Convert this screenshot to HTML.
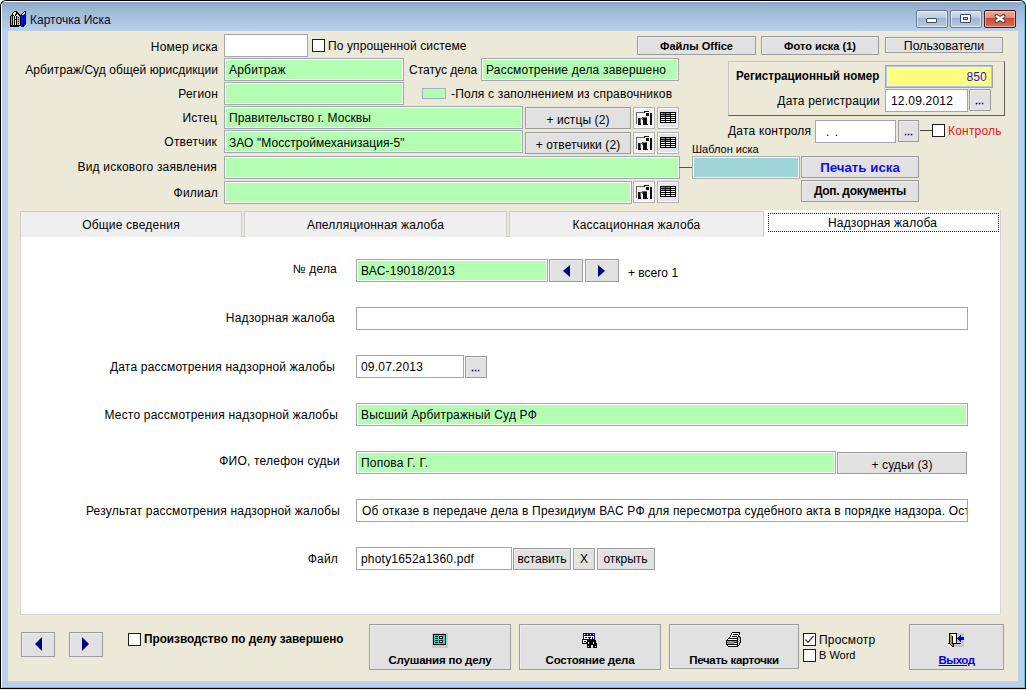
<!DOCTYPE html>
<html><head><meta charset="utf-8">
<style>
*{box-sizing:border-box;margin:0;padding:0}
html,body{width:1026px;height:690px;overflow:hidden;background:#fff}
body{position:relative;font-family:"Liberation Sans",sans-serif;font-size:12px;color:#000}
svg{display:block}
.a{position:absolute}
.win{position:absolute;left:0;top:0;width:1026px;height:689px;background:#000;border-radius:6px 6px 0 0}
.frame{position:absolute;left:1px;top:1px;width:1024px;height:687px;background:linear-gradient(#fff 0,#fff 1px,#8ea9ca 1px,#a3bcd9 12px,#b9d1ea 30px,#b9d1ea 100%);border-radius:5px 5px 0 0}
.client{position:absolute;left:8px;top:31px;width:1010px;height:650px;background:#ECE9D8}
.t{position:absolute;white-space:nowrap;line-height:14px;letter-spacing:0.2px}
.r{text-align:right}
.fld{position:absolute;background:#B4FEB4;border:1px solid #a4a4b2;box-shadow:inset 1px 1px 0 #fff, inset -1px -1px 0 #fff}
.wf{position:absolute;background:#fff;border:1px solid #a4a4b2}
.btn{position:absolute;background:#E1E1E1;border:1px solid #9c9c9c;box-shadow:inset 1px 1px 0 #ececec;text-align:center;white-space:nowrap;line-height:14px;letter-spacing:0.2px}
.b{font-weight:bold;letter-spacing:0}
.cb{position:absolute;width:13px;height:13px;border:1px solid #1c1c1c;background:#fff}
.tab{position:absolute;top:211px;height:26px;background:#EFEFEF;border:1px solid #cdcdcd;border-bottom:none;text-align:center;line-height:26px;letter-spacing:0.2px}
.tri{position:absolute;width:0;height:0}
.ib{position:absolute;background:#F4F4F4;border:1px solid #b4b4b4;box-shadow:inset 1px 1px 0 #fff,inset -1px -1px 0 #fff}
.gb{position:absolute;background:#E4E4E4;border:1px solid #b4b4b4;box-shadow:inset 1px 1px 0 #f8f8f8,inset -1px -1px 0 #f8f8f8}
</style></head><body>
<div class="win"></div>
<div class="frame"></div>
<div class="a" style="left:0;top:689px;width:1026px;height:1px;background:#f5f0a0"></div>
<div class="a" style="left:1px;top:687px;width:1024px;height:1px;background:#3fd0f0"></div><div class="a" style="left:1px;top:4px;width:1px;height:684px;background:#f4f8ff"></div><div class="a" style="left:1024px;top:4px;width:1px;height:684px;background:#3fd0f0"></div>
<div class="client"></div>

<!-- title bar -->
<div class="a" style="left:10px;top:11px"><svg width="16" height="16" viewBox="0 0 16 16" shape-rendering="crispEdges"><rect x="4" y="0" width="3" height="1" fill="#000"/><rect x="14" y="0" width="2" height="1" fill="#000"/><rect x="3" y="1" width="1" height="1" fill="#000"/><rect x="4" y="1" width="2" height="1" fill="#e8e8e8"/><rect x="6" y="1" width="2" height="1" fill="#000"/><rect x="13" y="1" width="1" height="1" fill="#000"/><rect x="14" y="1" width="1" height="1" fill="#e8e8e8"/><rect x="15" y="1" width="1" height="1" fill="#000"/><rect x="2" y="2" width="1" height="1" fill="#000"/><rect x="3" y="2" width="2" height="1" fill="#e8e8e8"/><rect x="5" y="2" width="1" height="1" fill="#ffff00"/><rect x="6" y="2" width="3" height="1" fill="#000"/><rect x="12" y="2" width="1" height="1" fill="#000"/><rect x="13" y="2" width="1" height="1" fill="#e8e8e8"/><rect x="14" y="2" width="1" height="1" fill="#f0c8c8"/><rect x="15" y="2" width="1" height="1" fill="#000"/><rect x="2" y="3" width="1" height="1" fill="#000"/><rect x="3" y="3" width="1" height="1" fill="#e8e8e8"/><rect x="4" y="3" width="1" height="1" fill="#ffff00"/><rect x="5" y="3" width="2" height="1" fill="#000"/><rect x="7" y="3" width="1" height="1" fill="#e8e8e8"/><rect x="8" y="3" width="2" height="1" fill="#000"/><rect x="11" y="3" width="1" height="1" fill="#000"/><rect x="12" y="3" width="2" height="1" fill="#f0c8c8"/><rect x="14" y="3" width="1" height="1" fill="#0010ff"/><rect x="15" y="3" width="1" height="1" fill="#000"/><rect x="1" y="4" width="3" height="1" fill="#000"/><rect x="4" y="4" width="1" height="1" fill="#ffff00"/><rect x="5" y="4" width="1" height="1" fill="#000"/><rect x="6" y="4" width="2" height="1" fill="#e8e8e8"/><rect x="8" y="4" width="1" height="1" fill="#b8b8b8"/><rect x="9" y="4" width="2" height="1" fill="#000"/><rect x="11" y="4" width="2" height="1" fill="#0010ff"/><rect x="13" y="4" width="1" height="1" fill="#000"/><rect x="14" y="4" width="1" height="1" fill="#0010ff"/><rect x="15" y="4" width="1" height="1" fill="#000"/><rect x="0" y="5" width="1" height="1" fill="#000"/><rect x="1" y="5" width="1" height="1" fill="#00e8f0"/><rect x="2" y="5" width="1" height="1" fill="#000"/><rect x="3" y="5" width="1" height="1" fill="#ffff00"/><rect x="4" y="5" width="1" height="1" fill="#000"/><rect x="5" y="5" width="1" height="1" fill="#e8e8e8"/><rect x="6" y="5" width="1" height="1" fill="#000"/><rect x="7" y="5" width="3" height="1" fill="#b8b8b8"/><rect x="10" y="5" width="1" height="1" fill="#000"/><rect x="11" y="5" width="2" height="1" fill="#0010ff"/><rect x="13" y="5" width="1" height="1" fill="#000"/><rect x="14" y="5" width="1" height="1" fill="#0010ff"/><rect x="15" y="5" width="1" height="1" fill="#000"/><rect x="0" y="6" width="1" height="1" fill="#000"/><rect x="1" y="6" width="1" height="1" fill="#00e8f0"/><rect x="2" y="6" width="1" height="1" fill="#000"/><rect x="3" y="6" width="1" height="1" fill="#ffff00"/><rect x="4" y="6" width="1" height="1" fill="#000"/><rect x="5" y="6" width="1" height="1" fill="#e8e8e8"/><rect x="6" y="6" width="1" height="1" fill="#000"/><rect x="7" y="6" width="1" height="1" fill="#b8b8b8"/><rect x="8" y="6" width="1" height="1" fill="#000"/><rect x="9" y="6" width="1" height="1" fill="#b8b8b8"/><rect x="10" y="6" width="1" height="1" fill="#000"/><rect x="11" y="6" width="2" height="1" fill="#0010ff"/><rect x="13" y="6" width="1" height="1" fill="#000"/><rect x="14" y="6" width="1" height="1" fill="#0010ff"/><rect x="15" y="6" width="1" height="1" fill="#000"/><rect x="0" y="7" width="1" height="1" fill="#000"/><rect x="1" y="7" width="1" height="1" fill="#00e8f0"/><rect x="2" y="7" width="1" height="1" fill="#000"/><rect x="3" y="7" width="1" height="1" fill="#ffff00"/><rect x="4" y="7" width="1" height="1" fill="#000"/><rect x="5" y="7" width="1" height="1" fill="#e8e8e8"/><rect x="6" y="7" width="1" height="1" fill="#000"/><rect x="7" y="7" width="3" height="1" fill="#b8b8b8"/><rect x="10" y="7" width="1" height="1" fill="#000"/><rect x="11" y="7" width="2" height="1" fill="#0010ff"/><rect x="13" y="7" width="1" height="1" fill="#000"/><rect x="14" y="7" width="1" height="1" fill="#0010ff"/><rect x="15" y="7" width="1" height="1" fill="#000"/><rect x="0" y="8" width="1" height="1" fill="#000"/><rect x="1" y="8" width="1" height="1" fill="#00e8f0"/><rect x="2" y="8" width="1" height="1" fill="#000"/><rect x="3" y="8" width="1" height="1" fill="#ffff00"/><rect x="4" y="8" width="3" height="1" fill="#000"/><rect x="7" y="8" width="1" height="1" fill="#b8b8b8"/><rect x="8" y="8" width="1" height="1" fill="#000"/><rect x="9" y="8" width="1" height="1" fill="#b8b8b8"/><rect x="10" y="8" width="1" height="1" fill="#000"/><rect x="11" y="8" width="2" height="1" fill="#0010ff"/><rect x="13" y="8" width="1" height="1" fill="#000"/><rect x="14" y="8" width="1" height="1" fill="#0010ff"/><rect x="15" y="8" width="1" height="1" fill="#000"/><rect x="0" y="9" width="1" height="1" fill="#000"/><rect x="1" y="9" width="1" height="1" fill="#00e8f0"/><rect x="2" y="9" width="1" height="1" fill="#000"/><rect x="3" y="9" width="1" height="1" fill="#ffff00"/><rect x="4" y="9" width="1" height="1" fill="#000"/><rect x="5" y="9" width="1" height="1" fill="#e8e8e8"/><rect x="6" y="9" width="1" height="1" fill="#000"/><rect x="7" y="9" width="3" height="1" fill="#b8b8b8"/><rect x="10" y="9" width="1" height="1" fill="#000"/><rect x="11" y="9" width="2" height="1" fill="#0010ff"/><rect x="13" y="9" width="1" height="1" fill="#000"/><rect x="14" y="9" width="1" height="1" fill="#0010ff"/><rect x="15" y="9" width="1" height="1" fill="#000"/><rect x="0" y="10" width="1" height="1" fill="#000"/><rect x="1" y="10" width="1" height="1" fill="#00e8f0"/><rect x="2" y="10" width="1" height="1" fill="#000"/><rect x="3" y="10" width="1" height="1" fill="#ffff00"/><rect x="4" y="10" width="1" height="1" fill="#000"/><rect x="5" y="10" width="1" height="1" fill="#e8e8e8"/><rect x="6" y="10" width="1" height="1" fill="#000"/><rect x="7" y="10" width="1" height="1" fill="#b8b8b8"/><rect x="8" y="10" width="1" height="1" fill="#000"/><rect x="9" y="10" width="1" height="1" fill="#b8b8b8"/><rect x="10" y="10" width="1" height="1" fill="#000"/><rect x="11" y="10" width="2" height="1" fill="#0010ff"/><rect x="13" y="10" width="1" height="1" fill="#000"/><rect x="14" y="10" width="1" height="1" fill="#0010ff"/><rect x="15" y="10" width="1" height="1" fill="#000"/><rect x="0" y="11" width="1" height="1" fill="#000"/><rect x="1" y="11" width="1" height="1" fill="#00e8f0"/><rect x="2" y="11" width="1" height="1" fill="#000"/><rect x="3" y="11" width="1" height="1" fill="#ffff00"/><rect x="4" y="11" width="1" height="1" fill="#000"/><rect x="5" y="11" width="1" height="1" fill="#e8e8e8"/><rect x="6" y="11" width="1" height="1" fill="#000"/><rect x="7" y="11" width="3" height="1" fill="#b8b8b8"/><rect x="10" y="11" width="1" height="1" fill="#000"/><rect x="11" y="11" width="2" height="1" fill="#0010ff"/><rect x="13" y="11" width="1" height="1" fill="#000"/><rect x="14" y="11" width="1" height="1" fill="#0010ff"/><rect x="15" y="11" width="1" height="1" fill="#000"/><rect x="0" y="12" width="1" height="1" fill="#000"/><rect x="1" y="12" width="1" height="1" fill="#00e8f0"/><rect x="2" y="12" width="1" height="1" fill="#000"/><rect x="3" y="12" width="1" height="1" fill="#ffff00"/><rect x="4" y="12" width="1" height="1" fill="#000"/><rect x="5" y="12" width="1" height="1" fill="#e8e8e8"/><rect x="6" y="12" width="1" height="1" fill="#000"/><rect x="7" y="12" width="1" height="1" fill="#b8b8b8"/><rect x="8" y="12" width="1" height="1" fill="#000"/><rect x="9" y="12" width="1" height="1" fill="#b8b8b8"/><rect x="10" y="12" width="1" height="1" fill="#000"/><rect x="11" y="12" width="2" height="1" fill="#0010ff"/><rect x="13" y="12" width="1" height="1" fill="#000"/><rect x="14" y="12" width="1" height="1" fill="#0010ff"/><rect x="15" y="12" width="1" height="1" fill="#000"/><rect x="0" y="13" width="1" height="1" fill="#000"/><rect x="1" y="13" width="1" height="1" fill="#00e8f0"/><rect x="2" y="13" width="1" height="1" fill="#000"/><rect x="3" y="13" width="1" height="1" fill="#ffff00"/><rect x="4" y="13" width="1" height="1" fill="#000"/><rect x="5" y="13" width="1" height="1" fill="#e8e8e8"/><rect x="6" y="13" width="1" height="1" fill="#000"/><rect x="7" y="13" width="3" height="1" fill="#b8b8b8"/><rect x="10" y="13" width="1" height="1" fill="#000"/><rect x="11" y="13" width="2" height="1" fill="#0010ff"/><rect x="13" y="13" width="3" height="1" fill="#000"/><rect x="0" y="14" width="11" height="1" fill="#000"/><rect x="11" y="14" width="2" height="1" fill="#0010ff"/><rect x="13" y="14" width="2" height="1" fill="#000"/><rect x="0" y="15" width="9" height="1" fill="#000"/><rect x="11" y="15" width="3" height="1" fill="#000"/></svg></div>
<div class="t" style="left:30px;top:13px;font-size:13px;color:#0a0a28;letter-spacing:0;transform:scaleX(0.925);transform-origin:0 0">Карточка Иска</div>
<div class="a" style="left:916px;top:10px;width:32px;height:18px;border:1px solid #687890;border-radius:2px;background:linear-gradient(#d4e0f0 0,#bccfe6 40%,#9cb4d2 44%,#b8cce4 100%);box-shadow:inset 0 0 0 1px rgba(255,255,255,.6)"></div>
<div class="a" style="left:926px;top:18px;width:11px;height:5px;background:#fff;border:1px solid #3e4a5e;border-radius:1px"></div>
<div class="a" style="left:950px;top:10px;width:32px;height:18px;border:1px solid #687890;border-radius:2px;background:linear-gradient(#d4e0f0 0,#bccfe6 40%,#9cb4d2 44%,#b8cce4 100%);box-shadow:inset 0 0 0 1px rgba(255,255,255,.6)"></div>
<div class="a" style="left:960px;top:14px;width:11px;height:9px;background:#fff;border:1px solid #3e4a5e;border-radius:1px"></div>
<div class="a" style="left:963px;top:17px;width:5px;height:3px;border:1px solid #3e4a5e;background:#b0c4e0"></div>
<div class="a" style="left:984px;top:10px;width:32px;height:18px;border:1px solid #4a1a18;border-radius:2px;background:linear-gradient(#eca898 0,#e29080 40%,#c84a30 44%,#d87058 100%);box-shadow:inset 0 0 0 1px rgba(255,210,200,.6)"></div>
<svg class="a" style="left:993px;top:13px" width="14" height="11" viewBox="0 0 14 11"><path d="M3.5 3 L10.5 8 M10.5 3 L3.5 8" stroke="#4a3838" stroke-width="4" fill="none" stroke-linecap="round"/><path d="M3.8 3.3 L10.2 7.7 M10.2 3.3 L3.8 7.7" stroke="#fff" stroke-width="2.3" fill="none" stroke-linecap="square"/></svg>

<!-- top form labels -->
<div class="t r" style="right:808px;top:40px">Номер иска</div>
<div class="t r" style="right:808px;top:63px;letter-spacing:0.07px">Арбитраж/Суд общей юрисдикции</div>
<div class="t r" style="right:808px;top:87px">Регион</div>
<div class="t r" style="right:809px;top:111px">Истец</div>
<div class="t r" style="right:809px;top:135px">Ответчик</div>
<div class="t r" style="right:809px;top:160px">Вид искового заявления</div>
<div class="t r" style="right:808px;top:186px">Филиал</div>

<div class="wf" style="left:224px;top:34px;width:84px;height:23px"></div>
<div class="fld" style="left:224px;top:58px;width:180px;height:23px"></div>
<div class="fld" style="left:224px;top:82px;width:180px;height:23px"></div>
<div class="fld" style="left:224px;top:106px;width:299px;height:23px"></div>
<div class="fld" style="left:224px;top:130px;width:299px;height:23px"></div>
<div class="fld" style="left:224px;top:156px;width:456px;height:23px"></div>
<div class="fld" style="left:224px;top:181px;width:408px;height:23px"></div>

<div class="t" style="left:229px;top:63px">Арбитраж</div>
<div class="t" style="left:229px;top:111px;letter-spacing:0.07px">Правительство г. Москвы</div>
<div class="t" style="left:229px;top:136px;letter-spacing:0.06px">ЗАО "Мосстроймеханизация-5"</div>

<div class="cb" style="left:312px;top:39px"></div>
<div class="t" style="left:328px;top:39px;letter-spacing:0.1px">По упрощенной системе</div>

<div class="t" style="left:409px;top:63px;letter-spacing:0">Статус дела</div>
<div class="fld" style="left:481px;top:58px;width:198px;height:23px"></div>
<div class="t" style="left:486px;top:63px">Рассмотрение дела завершено</div>

<div class="a" style="left:422px;top:88px;width:24px;height:11px;background:#B4FEB4;border:1px solid #a8b0c8"></div>
<div class="t" style="left:451px;top:87px">-Поля с заполнением из справочников</div>

<div class="btn" style="left:525px;top:107px;width:106px;height:22px;line-height:25px;letter-spacing:0.1px">+ истцы (2)</div>
<div class="btn" style="left:525px;top:132px;width:106px;height:22px;line-height:24px;letter-spacing:0.1px">+ ответчики (2)</div>

<!-- small icon buttons -->
<div class="ib" style="left:633px;top:107px;width:22px;height:22px"><div class="a" style="left:-1px;top:-1px"><svg width="22" height="19" viewBox="0 0 22 19" shape-rendering="crispEdges"><rect x="11" y="4" width="5" height="1" fill="#111"/><rect x="3" y="5" width="8" height="1" fill="#666"/><rect x="11" y="5" width="1" height="1" fill="#111"/><rect x="3" y="6" width="1" height="1" fill="#666"/><rect x="13" y="6" width="3" height="1" fill="#111"/><rect x="17" y="6" width="2" height="1" fill="#111"/><rect x="3" y="7" width="1" height="1" fill="#666"/><rect x="13" y="7" width="3" height="1" fill="#111"/><rect x="17" y="7" width="2" height="1" fill="#111"/><rect x="3" y="8" width="1" height="1" fill="#666"/><rect x="13" y="8" width="3" height="1" fill="#111"/><rect x="17" y="8" width="2" height="1" fill="#111"/><rect x="3" y="9" width="1" height="1" fill="#666"/><rect x="17" y="9" width="2" height="1" fill="#111"/><rect x="3" y="10" width="1" height="1" fill="#666"/><rect x="9" y="10" width="5" height="1" fill="#666"/><rect x="17" y="10" width="2" height="1" fill="#111"/><rect x="3" y="11" width="1" height="1" fill="#666"/><rect x="5" y="11" width="2" height="1" fill="#111"/><rect x="7" y="11" width="3" height="1" fill="#666"/><rect x="10" y="11" width="4" height="1" fill="#111"/><rect x="17" y="11" width="2" height="1" fill="#111"/><rect x="3" y="12" width="1" height="1" fill="#666"/><rect x="5" y="12" width="2" height="1" fill="#111"/><rect x="7" y="12" width="1" height="1" fill="#666"/><rect x="9" y="12" width="1" height="1" fill="#666"/><rect x="10" y="12" width="4" height="1" fill="#111"/><rect x="17" y="12" width="2" height="1" fill="#111"/><rect x="3" y="13" width="1" height="1" fill="#666"/><rect x="5" y="13" width="2" height="1" fill="#111"/><rect x="7" y="13" width="1" height="1" fill="#666"/><rect x="10" y="13" width="4" height="1" fill="#111"/><rect x="17" y="13" width="2" height="1" fill="#111"/><rect x="3" y="14" width="1" height="1" fill="#666"/><rect x="5" y="14" width="2" height="1" fill="#111"/><rect x="7" y="14" width="1" height="1" fill="#666"/><rect x="10" y="14" width="4" height="1" fill="#111"/><rect x="17" y="14" width="2" height="1" fill="#111"/><rect x="3" y="15" width="1" height="1" fill="#666"/><rect x="5" y="15" width="2" height="1" fill="#111"/><rect x="7" y="15" width="1" height="1" fill="#666"/><rect x="10" y="15" width="4" height="1" fill="#111"/><rect x="17" y="15" width="2" height="1" fill="#111"/><rect x="3" y="16" width="1" height="1" fill="#666"/><rect x="5" y="16" width="3" height="1" fill="#111"/><rect x="10" y="16" width="4" height="1" fill="#111"/><rect x="17" y="16" width="2" height="1" fill="#111"/><rect x="5" y="17" width="3" height="1" fill="#111"/><rect x="10" y="17" width="5" height="1" fill="#111"/><rect x="17" y="17" width="2" height="1" fill="#111"/></svg></div></div>
<div class="gb" style="left:657px;top:107px;width:22px;height:22px"><div class="a" style="left:2px;top:4px"><svg width="16" height="11" viewBox="0 0 16 11" shape-rendering="crispEdges"><rect x="0" y="0" width="16" height="1" fill="#000"/><rect x="0" y="1" width="1" height="1" fill="#000"/><rect x="1" y="1" width="4" height="1" fill="#909090"/><rect x="5" y="1" width="1" height="1" fill="#000"/><rect x="6" y="1" width="4" height="1" fill="#909090"/><rect x="10" y="1" width="1" height="1" fill="#000"/><rect x="11" y="1" width="4" height="1" fill="#f8f8f8"/><rect x="15" y="1" width="1" height="1" fill="#000"/><rect x="0" y="2" width="16" height="1" fill="#000"/><rect x="0" y="3" width="1" height="1" fill="#000"/><rect x="1" y="3" width="4" height="1" fill="#909090"/><rect x="5" y="3" width="1" height="1" fill="#000"/><rect x="6" y="3" width="4" height="1" fill="#909090"/><rect x="10" y="3" width="1" height="1" fill="#000"/><rect x="11" y="3" width="4" height="1" fill="#f8f8f8"/><rect x="15" y="3" width="1" height="1" fill="#000"/><rect x="0" y="4" width="16" height="1" fill="#000"/><rect x="0" y="5" width="1" height="1" fill="#000"/><rect x="1" y="5" width="4" height="1" fill="#f8f8f8"/><rect x="5" y="5" width="1" height="1" fill="#000"/><rect x="6" y="5" width="4" height="1" fill="#f8f8f8"/><rect x="10" y="5" width="1" height="1" fill="#000"/><rect x="11" y="5" width="4" height="1" fill="#f8f8f8"/><rect x="15" y="5" width="1" height="1" fill="#000"/><rect x="0" y="6" width="16" height="1" fill="#000"/><rect x="0" y="7" width="1" height="1" fill="#000"/><rect x="1" y="7" width="4" height="1" fill="#f8f8f8"/><rect x="5" y="7" width="1" height="1" fill="#000"/><rect x="6" y="7" width="4" height="1" fill="#f8f8f8"/><rect x="10" y="7" width="1" height="1" fill="#000"/><rect x="11" y="7" width="4" height="1" fill="#f8f8f8"/><rect x="15" y="7" width="1" height="1" fill="#000"/><rect x="0" y="8" width="16" height="1" fill="#000"/><rect x="0" y="9" width="1" height="1" fill="#000"/><rect x="1" y="9" width="4" height="1" fill="#f8f8f8"/><rect x="5" y="9" width="1" height="1" fill="#000"/><rect x="6" y="9" width="4" height="1" fill="#f8f8f8"/><rect x="10" y="9" width="1" height="1" fill="#000"/><rect x="11" y="9" width="4" height="1" fill="#f8f8f8"/><rect x="15" y="9" width="1" height="1" fill="#000"/><rect x="0" y="10" width="16" height="1" fill="#000"/></svg></div></div>
<div class="ib" style="left:633px;top:132px;width:22px;height:22px"><div class="a" style="left:-1px;top:-1px"><svg width="22" height="19" viewBox="0 0 22 19" shape-rendering="crispEdges"><rect x="11" y="4" width="5" height="1" fill="#111"/><rect x="3" y="5" width="8" height="1" fill="#666"/><rect x="11" y="5" width="1" height="1" fill="#111"/><rect x="3" y="6" width="1" height="1" fill="#666"/><rect x="13" y="6" width="3" height="1" fill="#111"/><rect x="17" y="6" width="2" height="1" fill="#111"/><rect x="3" y="7" width="1" height="1" fill="#666"/><rect x="13" y="7" width="3" height="1" fill="#111"/><rect x="17" y="7" width="2" height="1" fill="#111"/><rect x="3" y="8" width="1" height="1" fill="#666"/><rect x="13" y="8" width="3" height="1" fill="#111"/><rect x="17" y="8" width="2" height="1" fill="#111"/><rect x="3" y="9" width="1" height="1" fill="#666"/><rect x="17" y="9" width="2" height="1" fill="#111"/><rect x="3" y="10" width="1" height="1" fill="#666"/><rect x="9" y="10" width="5" height="1" fill="#666"/><rect x="17" y="10" width="2" height="1" fill="#111"/><rect x="3" y="11" width="1" height="1" fill="#666"/><rect x="5" y="11" width="2" height="1" fill="#111"/><rect x="7" y="11" width="3" height="1" fill="#666"/><rect x="10" y="11" width="4" height="1" fill="#111"/><rect x="17" y="11" width="2" height="1" fill="#111"/><rect x="3" y="12" width="1" height="1" fill="#666"/><rect x="5" y="12" width="2" height="1" fill="#111"/><rect x="7" y="12" width="1" height="1" fill="#666"/><rect x="9" y="12" width="1" height="1" fill="#666"/><rect x="10" y="12" width="4" height="1" fill="#111"/><rect x="17" y="12" width="2" height="1" fill="#111"/><rect x="3" y="13" width="1" height="1" fill="#666"/><rect x="5" y="13" width="2" height="1" fill="#111"/><rect x="7" y="13" width="1" height="1" fill="#666"/><rect x="10" y="13" width="4" height="1" fill="#111"/><rect x="17" y="13" width="2" height="1" fill="#111"/><rect x="3" y="14" width="1" height="1" fill="#666"/><rect x="5" y="14" width="2" height="1" fill="#111"/><rect x="7" y="14" width="1" height="1" fill="#666"/><rect x="10" y="14" width="4" height="1" fill="#111"/><rect x="17" y="14" width="2" height="1" fill="#111"/><rect x="3" y="15" width="1" height="1" fill="#666"/><rect x="5" y="15" width="2" height="1" fill="#111"/><rect x="7" y="15" width="1" height="1" fill="#666"/><rect x="10" y="15" width="4" height="1" fill="#111"/><rect x="17" y="15" width="2" height="1" fill="#111"/><rect x="3" y="16" width="1" height="1" fill="#666"/><rect x="5" y="16" width="3" height="1" fill="#111"/><rect x="10" y="16" width="4" height="1" fill="#111"/><rect x="17" y="16" width="2" height="1" fill="#111"/><rect x="5" y="17" width="3" height="1" fill="#111"/><rect x="10" y="17" width="5" height="1" fill="#111"/><rect x="17" y="17" width="2" height="1" fill="#111"/></svg></div></div>
<div class="gb" style="left:657px;top:132px;width:22px;height:22px"><div class="a" style="left:2px;top:4px"><svg width="16" height="11" viewBox="0 0 16 11" shape-rendering="crispEdges"><rect x="0" y="0" width="16" height="1" fill="#000"/><rect x="0" y="1" width="1" height="1" fill="#000"/><rect x="1" y="1" width="4" height="1" fill="#909090"/><rect x="5" y="1" width="1" height="1" fill="#000"/><rect x="6" y="1" width="4" height="1" fill="#909090"/><rect x="10" y="1" width="1" height="1" fill="#000"/><rect x="11" y="1" width="4" height="1" fill="#f8f8f8"/><rect x="15" y="1" width="1" height="1" fill="#000"/><rect x="0" y="2" width="16" height="1" fill="#000"/><rect x="0" y="3" width="1" height="1" fill="#000"/><rect x="1" y="3" width="4" height="1" fill="#909090"/><rect x="5" y="3" width="1" height="1" fill="#000"/><rect x="6" y="3" width="4" height="1" fill="#909090"/><rect x="10" y="3" width="1" height="1" fill="#000"/><rect x="11" y="3" width="4" height="1" fill="#f8f8f8"/><rect x="15" y="3" width="1" height="1" fill="#000"/><rect x="0" y="4" width="16" height="1" fill="#000"/><rect x="0" y="5" width="1" height="1" fill="#000"/><rect x="1" y="5" width="4" height="1" fill="#f8f8f8"/><rect x="5" y="5" width="1" height="1" fill="#000"/><rect x="6" y="5" width="4" height="1" fill="#f8f8f8"/><rect x="10" y="5" width="1" height="1" fill="#000"/><rect x="11" y="5" width="4" height="1" fill="#f8f8f8"/><rect x="15" y="5" width="1" height="1" fill="#000"/><rect x="0" y="6" width="16" height="1" fill="#000"/><rect x="0" y="7" width="1" height="1" fill="#000"/><rect x="1" y="7" width="4" height="1" fill="#f8f8f8"/><rect x="5" y="7" width="1" height="1" fill="#000"/><rect x="6" y="7" width="4" height="1" fill="#f8f8f8"/><rect x="10" y="7" width="1" height="1" fill="#000"/><rect x="11" y="7" width="4" height="1" fill="#f8f8f8"/><rect x="15" y="7" width="1" height="1" fill="#000"/><rect x="0" y="8" width="16" height="1" fill="#000"/><rect x="0" y="9" width="1" height="1" fill="#000"/><rect x="1" y="9" width="4" height="1" fill="#f8f8f8"/><rect x="5" y="9" width="1" height="1" fill="#000"/><rect x="6" y="9" width="4" height="1" fill="#f8f8f8"/><rect x="10" y="9" width="1" height="1" fill="#000"/><rect x="11" y="9" width="4" height="1" fill="#f8f8f8"/><rect x="15" y="9" width="1" height="1" fill="#000"/><rect x="0" y="10" width="16" height="1" fill="#000"/></svg></div></div>
<div class="ib" style="left:633px;top:181px;width:22px;height:22px"><div class="a" style="left:-1px;top:-1px"><svg width="22" height="19" viewBox="0 0 22 19" shape-rendering="crispEdges"><rect x="11" y="4" width="5" height="1" fill="#111"/><rect x="3" y="5" width="8" height="1" fill="#666"/><rect x="11" y="5" width="1" height="1" fill="#111"/><rect x="3" y="6" width="1" height="1" fill="#666"/><rect x="13" y="6" width="3" height="1" fill="#111"/><rect x="17" y="6" width="2" height="1" fill="#111"/><rect x="3" y="7" width="1" height="1" fill="#666"/><rect x="13" y="7" width="3" height="1" fill="#111"/><rect x="17" y="7" width="2" height="1" fill="#111"/><rect x="3" y="8" width="1" height="1" fill="#666"/><rect x="13" y="8" width="3" height="1" fill="#111"/><rect x="17" y="8" width="2" height="1" fill="#111"/><rect x="3" y="9" width="1" height="1" fill="#666"/><rect x="17" y="9" width="2" height="1" fill="#111"/><rect x="3" y="10" width="1" height="1" fill="#666"/><rect x="9" y="10" width="5" height="1" fill="#666"/><rect x="17" y="10" width="2" height="1" fill="#111"/><rect x="3" y="11" width="1" height="1" fill="#666"/><rect x="5" y="11" width="2" height="1" fill="#111"/><rect x="7" y="11" width="3" height="1" fill="#666"/><rect x="10" y="11" width="4" height="1" fill="#111"/><rect x="17" y="11" width="2" height="1" fill="#111"/><rect x="3" y="12" width="1" height="1" fill="#666"/><rect x="5" y="12" width="2" height="1" fill="#111"/><rect x="7" y="12" width="1" height="1" fill="#666"/><rect x="9" y="12" width="1" height="1" fill="#666"/><rect x="10" y="12" width="4" height="1" fill="#111"/><rect x="17" y="12" width="2" height="1" fill="#111"/><rect x="3" y="13" width="1" height="1" fill="#666"/><rect x="5" y="13" width="2" height="1" fill="#111"/><rect x="7" y="13" width="1" height="1" fill="#666"/><rect x="10" y="13" width="4" height="1" fill="#111"/><rect x="17" y="13" width="2" height="1" fill="#111"/><rect x="3" y="14" width="1" height="1" fill="#666"/><rect x="5" y="14" width="2" height="1" fill="#111"/><rect x="7" y="14" width="1" height="1" fill="#666"/><rect x="10" y="14" width="4" height="1" fill="#111"/><rect x="17" y="14" width="2" height="1" fill="#111"/><rect x="3" y="15" width="1" height="1" fill="#666"/><rect x="5" y="15" width="2" height="1" fill="#111"/><rect x="7" y="15" width="1" height="1" fill="#666"/><rect x="10" y="15" width="4" height="1" fill="#111"/><rect x="17" y="15" width="2" height="1" fill="#111"/><rect x="3" y="16" width="1" height="1" fill="#666"/><rect x="5" y="16" width="3" height="1" fill="#111"/><rect x="10" y="16" width="4" height="1" fill="#111"/><rect x="17" y="16" width="2" height="1" fill="#111"/><rect x="5" y="17" width="3" height="1" fill="#111"/><rect x="10" y="17" width="5" height="1" fill="#111"/><rect x="17" y="17" width="2" height="1" fill="#111"/></svg></div></div>
<div class="gb" style="left:657px;top:181px;width:22px;height:22px"><div class="a" style="left:2px;top:4px"><svg width="16" height="11" viewBox="0 0 16 11" shape-rendering="crispEdges"><rect x="0" y="0" width="16" height="1" fill="#000"/><rect x="0" y="1" width="1" height="1" fill="#000"/><rect x="1" y="1" width="4" height="1" fill="#909090"/><rect x="5" y="1" width="1" height="1" fill="#000"/><rect x="6" y="1" width="4" height="1" fill="#909090"/><rect x="10" y="1" width="1" height="1" fill="#000"/><rect x="11" y="1" width="4" height="1" fill="#f8f8f8"/><rect x="15" y="1" width="1" height="1" fill="#000"/><rect x="0" y="2" width="16" height="1" fill="#000"/><rect x="0" y="3" width="1" height="1" fill="#000"/><rect x="1" y="3" width="4" height="1" fill="#909090"/><rect x="5" y="3" width="1" height="1" fill="#000"/><rect x="6" y="3" width="4" height="1" fill="#909090"/><rect x="10" y="3" width="1" height="1" fill="#000"/><rect x="11" y="3" width="4" height="1" fill="#f8f8f8"/><rect x="15" y="3" width="1" height="1" fill="#000"/><rect x="0" y="4" width="16" height="1" fill="#000"/><rect x="0" y="5" width="1" height="1" fill="#000"/><rect x="1" y="5" width="4" height="1" fill="#f8f8f8"/><rect x="5" y="5" width="1" height="1" fill="#000"/><rect x="6" y="5" width="4" height="1" fill="#f8f8f8"/><rect x="10" y="5" width="1" height="1" fill="#000"/><rect x="11" y="5" width="4" height="1" fill="#f8f8f8"/><rect x="15" y="5" width="1" height="1" fill="#000"/><rect x="0" y="6" width="16" height="1" fill="#000"/><rect x="0" y="7" width="1" height="1" fill="#000"/><rect x="1" y="7" width="4" height="1" fill="#f8f8f8"/><rect x="5" y="7" width="1" height="1" fill="#000"/><rect x="6" y="7" width="4" height="1" fill="#f8f8f8"/><rect x="10" y="7" width="1" height="1" fill="#000"/><rect x="11" y="7" width="4" height="1" fill="#f8f8f8"/><rect x="15" y="7" width="1" height="1" fill="#000"/><rect x="0" y="8" width="16" height="1" fill="#000"/><rect x="0" y="9" width="1" height="1" fill="#000"/><rect x="1" y="9" width="4" height="1" fill="#f8f8f8"/><rect x="5" y="9" width="1" height="1" fill="#000"/><rect x="6" y="9" width="4" height="1" fill="#f8f8f8"/><rect x="10" y="9" width="1" height="1" fill="#000"/><rect x="11" y="9" width="4" height="1" fill="#f8f8f8"/><rect x="15" y="9" width="1" height="1" fill="#000"/><rect x="0" y="10" width="16" height="1" fill="#000"/></svg></div></div>

<!-- top right buttons -->
<div class="btn b" style="left:637px;top:36px;width:119px;height:19px;line-height:18px;font-size:11px">Файлы Office</div>
<div class="btn b" style="left:761px;top:36px;width:118px;height:19px;line-height:18px;font-size:11px">Фото иска (1)</div>
<div class="btn" style="left:885px;top:37px;width:118px;height:16px;line-height:17px;font-size:12.3px;letter-spacing:0">Пользователи</div>

<!-- reg group -->
<div class="a" style="left:728px;top:61px;width:277px;height:55px;border-top:1px solid #c4c4cc;border-left:1px solid #c4c4cc;border-right:1px solid #5e5e5e;border-bottom:1px solid #5e5e5e"></div>
<div class="t b" style="left:736px;top:69px;font-size:12px;transform:scaleX(0.967);transform-origin:0 0">Регистрационный номер</div>
<div class="a" style="left:885px;top:65px;width:108px;height:23px;background:#FFFF80;border:1px solid #a4a4ac;box-shadow:inset 1px 1px 0 #b0c8ec,inset -1px -1px 0 #b0c8ec"></div>
<div class="t" style="left:885px;top:70px;width:102px;text-align:right;color:#1818e0">850</div>
<div class="t r" style="right:146px;top:94px">Дата регистрации</div>
<div class="wf" style="left:885px;top:89px;width:83px;height:23px"></div>
<div class="t" style="left:891px;top:94px">12.09.2012</div>
<div class="btn" style="left:969px;top:89px;width:22px;height:22px"><svg class="a" style="left:5px;top:12px" width="10" height="3"><rect x="0.8" y="0.8" width="1.5" height="1.5" fill="#000048"/><rect x="3.8" y="0.8" width="1.5" height="1.5" fill="#000048"/><rect x="6.8" y="0.8" width="1.5" height="1.5" fill="#000048"/></svg></div>

<!-- date kontrol -->
<div class="t" style="left:728px;top:124px">Дата контроля</div>
<div class="wf" style="left:815px;top:120px;width:81px;height:23px"></div>
<div class="t" style="left:826px;top:125px;letter-spacing:1px">. .</div>
<div class="btn" style="left:898px;top:120px;width:21px;height:22px"><svg class="a" style="left:5px;top:12px" width="10" height="3"><rect x="0.8" y="0.8" width="1.5" height="1.5" fill="#000048"/><rect x="3.8" y="0.8" width="1.5" height="1.5" fill="#000048"/><rect x="6.8" y="0.8" width="1.5" height="1.5" fill="#000048"/></svg></div>
<div class="a" style="left:920px;top:130px;width:12px;height:1px;background:#444"></div>
<div class="cb" style="left:932px;top:124px"></div>
<div class="t" style="left:948px;top:124px;color:#f01414">Контроль</div>

<div class="t" style="left:692px;top:142px;font-size:11px;letter-spacing:0">Шаблон иска</div>
<div class="a" style="left:679px;top:167px;width:13px;height:1px;background:#555"></div>
<div class="a" style="left:692px;top:156px;width:108px;height:23px;background:#9ED5D9;border:1px solid #b0b0b0;box-shadow:inset 1px 1px 0 #fff,inset -1px -1px 0 #fff"></div>
<div class="btn b" style="left:801px;top:156px;width:118px;height:22px;line-height:21px;font-size:13.3px;color:#1010f0">Печать иска</div>
<div class="btn b" style="left:801px;top:180px;width:118px;height:22px;line-height:21px;font-size:12px;letter-spacing:-0.3px">Доп. документы</div>

<!-- tabs -->
<div class="a" style="left:20px;top:236px;width:981px;height:379px;background:#fff;border:1px solid #d6d6d6;border-top:1px solid #c8c8c8"></div>
<div class="tab" style="left:20px;width:222px">Общие сведения</div>
<div class="tab" style="left:244px;width:263px">Апелляционная жалоба</div>
<div class="tab" style="left:509px;width:255px">Кассационная жалоба</div>
<div class="a" style="left:764px;top:209px;width:237px;height:29px;background:#fff;border-top:1px solid #e4e4e4;border-right:1px solid #d0d0d0;text-align:center;line-height:26px;letter-spacing:0.2px;padding-left:1px">Надзорная жалоба</div>
<div class="a" style="left:768px;top:213px;width:231px;height:19px;border:1px dotted #202020"></div>

<!-- panel content -->
<div class="t r" style="right:689px;top:262px">№ дела</div>
<div class="fld" style="left:356px;top:259px;width:192px;height:23px"></div>
<div class="t" style="left:361px;top:264px">ВАС-19018/2013</div>
<div class="btn" style="left:549px;top:259px;width:34px;height:23px"></div>
<div class="tri" style="left:563px;top:265px;border-right:7px solid #000080;border-top:6.5px solid transparent;border-bottom:6.5px solid transparent"></div>
<div class="btn" style="left:585px;top:259px;width:34px;height:23px"></div>
<div class="tri" style="left:598px;top:265px;border-left:7px solid #000080;border-top:6.5px solid transparent;border-bottom:6.5px solid transparent"></div>
<div class="t" style="left:628px;top:266px;letter-spacing:0">+ всего 1</div>

<div class="t r" style="right:691px;top:311px">Надзорная жалоба</div>
<div class="wf" style="left:356px;top:307px;width:612px;height:23px"></div>

<div class="t r" style="right:691px;top:360px">Дата рассмотрения надзорной жалобы</div>
<div class="wf" style="left:356px;top:355px;width:108px;height:23px"></div>
<div class="t" style="left:361px;top:360px">09.07.2013</div>
<div class="btn" style="left:465px;top:356px;width:22px;height:22px"><svg class="a" style="left:5px;top:12px" width="10" height="3"><rect x="0.8" y="0.8" width="1.5" height="1.5" fill="#000048"/><rect x="3.8" y="0.8" width="1.5" height="1.5" fill="#000048"/><rect x="6.8" y="0.8" width="1.5" height="1.5" fill="#000048"/></svg></div>

<div class="t r" style="right:688px;top:408px">Место рассмотрения надзорной жалобы</div>
<div class="fld" style="left:356px;top:403px;width:612px;height:23px"></div>
<div class="t" style="left:361px;top:408px">Высший Арбитражный Суд РФ</div>

<div class="t r" style="right:686px;top:454px">ФИО, телефон судьи</div>
<div class="fld" style="left:356px;top:451px;width:480px;height:23px"></div>
<div class="t" style="left:361px;top:456px">Попова Г. Г.</div>
<div class="btn" style="left:837px;top:452px;width:130px;height:22px;line-height:24px;letter-spacing:0.1px">+ судьи (3)</div>

<div class="t r" style="right:686px;top:504px">Результат рассмотрения надзорной жалобы</div>
<div class="wf" style="left:356px;top:499px;width:612px;height:23px;overflow:hidden"><div class="t" style="left:5px;top:4px">Об отказе в передаче дела в Президиум ВАС РФ для пересмотра судебного акта в порядке надзора. Оставить</div></div>

<div class="t r" style="right:688px;top:552px">Файл</div>
<div class="wf" style="left:356px;top:547px;width:156px;height:23px"></div>
<div class="t" style="left:361px;top:552px">photy1652a1360.pdf</div>
<div class="btn" style="left:513px;top:548px;width:58px;height:22px;line-height:20px;letter-spacing:0">вставить</div>
<div class="btn" style="left:573px;top:548px;width:22px;height:22px;line-height:20px">X</div>
<div class="btn" style="left:597px;top:548px;width:58px;height:22px;line-height:20px;letter-spacing:0;padding-right:1px">открыть</div>

<!-- bottom bar -->
<div class="btn" style="left:21px;top:632px;width:34px;height:25px"></div>
<div class="tri" style="left:35px;top:637px;border-right:7px solid #000080;border-top:7px solid transparent;border-bottom:7px solid transparent"></div>
<div class="btn" style="left:69px;top:632px;width:34px;height:25px"></div>
<div class="tri" style="left:82px;top:637px;border-left:7px solid #000080;border-top:7px solid transparent;border-bottom:7px solid transparent"></div>
<div class="cb" style="left:128px;top:633px"></div>
<div class="t b" style="left:144px;top:632px;font-size:12px;transform:scaleX(0.98);transform-origin:0 0">Производство по делу завершено</div>

<div class="btn b" style="left:369px;top:624px;width:142px;height:46px;font-size:11.5px;letter-spacing:-0.2px;padding-top:28px">Слушания по делу</div>
<div class="a" style="left:432px;top:633px;width:16px;height:15px;background:#c8c8c8"></div><div class="a" style="left:432px;top:633px"><svg width="16" height="13" viewBox="0 0 16 13" shape-rendering="crispEdges"><rect x="1" y="1" width="13" height="1" fill="#000"/><rect x="1" y="2" width="1" height="1" fill="#000"/><rect x="2" y="2" width="11" height="1" fill="#00e8f0"/><rect x="13" y="2" width="1" height="1" fill="#000"/><rect x="1" y="3" width="1" height="1" fill="#000"/><rect x="2" y="3" width="1" height="1" fill="#00e8f0"/><rect x="3" y="3" width="3" height="1" fill="#000"/><rect x="6" y="3" width="1" height="1" fill="#00e8f0"/><rect x="7" y="3" width="4" height="1" fill="#000"/><rect x="11" y="3" width="2" height="1" fill="#00e8f0"/><rect x="13" y="3" width="1" height="1" fill="#000"/><rect x="1" y="4" width="1" height="1" fill="#000"/><rect x="2" y="4" width="5" height="1" fill="#00e8f0"/><rect x="7" y="4" width="1" height="1" fill="#000"/><rect x="8" y="4" width="2" height="1" fill="#fff"/><rect x="10" y="4" width="1" height="1" fill="#000"/><rect x="11" y="4" width="2" height="1" fill="#00e8f0"/><rect x="13" y="4" width="1" height="1" fill="#000"/><rect x="1" y="5" width="1" height="1" fill="#000"/><rect x="2" y="5" width="1" height="1" fill="#00e8f0"/><rect x="3" y="5" width="3" height="1" fill="#000"/><rect x="6" y="5" width="1" height="1" fill="#00e8f0"/><rect x="7" y="5" width="4" height="1" fill="#000"/><rect x="11" y="5" width="2" height="1" fill="#00e8f0"/><rect x="13" y="5" width="1" height="1" fill="#000"/><rect x="1" y="6" width="1" height="1" fill="#000"/><rect x="2" y="6" width="11" height="1" fill="#00e8f0"/><rect x="13" y="6" width="1" height="1" fill="#000"/><rect x="1" y="7" width="1" height="1" fill="#000"/><rect x="2" y="7" width="1" height="1" fill="#00e8f0"/><rect x="3" y="7" width="3" height="1" fill="#000"/><rect x="6" y="7" width="1" height="1" fill="#00e8f0"/><rect x="7" y="7" width="4" height="1" fill="#000"/><rect x="11" y="7" width="2" height="1" fill="#00e8f0"/><rect x="13" y="7" width="1" height="1" fill="#000"/><rect x="1" y="8" width="1" height="1" fill="#000"/><rect x="2" y="8" width="5" height="1" fill="#00e8f0"/><rect x="7" y="8" width="1" height="1" fill="#000"/><rect x="8" y="8" width="2" height="1" fill="#fff"/><rect x="10" y="8" width="1" height="1" fill="#000"/><rect x="11" y="8" width="2" height="1" fill="#00e8f0"/><rect x="13" y="8" width="1" height="1" fill="#000"/><rect x="1" y="9" width="1" height="1" fill="#000"/><rect x="2" y="9" width="1" height="1" fill="#00e8f0"/><rect x="3" y="9" width="3" height="1" fill="#000"/><rect x="6" y="9" width="1" height="1" fill="#00e8f0"/><rect x="7" y="9" width="4" height="1" fill="#000"/><rect x="11" y="9" width="2" height="1" fill="#00e8f0"/><rect x="13" y="9" width="1" height="1" fill="#000"/><rect x="1" y="10" width="1" height="1" fill="#000"/><rect x="2" y="10" width="11" height="1" fill="#00e8f0"/><rect x="13" y="10" width="1" height="1" fill="#000"/><rect x="1" y="11" width="13" height="1" fill="#000"/></svg></div>
<div class="btn b" style="left:519px;top:624px;width:142px;height:46px;font-size:11.5px;letter-spacing:-0.2px;padding-top:28px">Состояние дела</div>
<div class="a" style="left:580px;top:631px"><svg width="18" height="17" viewBox="0 0 18 17" shape-rendering="crispEdges"><rect x="3" y="2" width="12" height="1" fill="#0000f0"/><rect x="3" y="3" width="1" height="1" fill="#0000f0"/><rect x="4" y="3" width="1" height="1" fill="#fff"/><rect x="5" y="3" width="2" height="1" fill="#0000f0"/><rect x="7" y="3" width="1" height="1" fill="#fff"/><rect x="8" y="3" width="2" height="1" fill="#0000f0"/><rect x="10" y="3" width="1" height="1" fill="#fff"/><rect x="11" y="3" width="2" height="1" fill="#0000f0"/><rect x="13" y="3" width="1" height="1" fill="#fff"/><rect x="14" y="3" width="1" height="1" fill="#0000f0"/><rect x="3" y="4" width="12" height="1" fill="#0000f0"/><rect x="3" y="5" width="1" height="1" fill="#0000f0"/><rect x="4" y="5" width="10" height="1" fill="#fff"/><rect x="14" y="5" width="1" height="1" fill="#0000f0"/><rect x="3" y="6" width="1" height="1" fill="#0000f0"/><rect x="4" y="6" width="1" height="1" fill="#fff"/><rect x="5" y="6" width="2" height="1" fill="#000"/><rect x="7" y="6" width="1" height="1" fill="#fff"/><rect x="8" y="6" width="3" height="1" fill="#000"/><rect x="11" y="6" width="1" height="1" fill="#fff"/><rect x="12" y="6" width="1" height="1" fill="#000"/><rect x="13" y="6" width="1" height="1" fill="#fff"/><rect x="14" y="6" width="1" height="1" fill="#0000f0"/><rect x="3" y="7" width="1" height="1" fill="#0000f0"/><rect x="4" y="7" width="5" height="1" fill="#fff"/><rect x="9" y="7" width="1" height="1" fill="#000"/><rect x="10" y="7" width="2" height="1" fill="#fff"/><rect x="12" y="7" width="1" height="1" fill="#000"/><rect x="13" y="7" width="1" height="1" fill="#fff"/><rect x="14" y="7" width="1" height="1" fill="#0000f0"/><rect x="2" y="8" width="5" height="1" fill="#000"/><rect x="7" y="8" width="2" height="1" fill="#0000f0"/><rect x="9" y="8" width="2" height="1" fill="#000"/><rect x="11" y="8" width="1" height="1" fill="#0000f0"/><rect x="12" y="8" width="2" height="1" fill="#000"/><rect x="14" y="8" width="1" height="1" fill="#0000f0"/><rect x="2" y="9" width="1" height="1" fill="#000"/><rect x="3" y="9" width="4" height="1" fill="#fff"/><rect x="7" y="9" width="9" height="1" fill="#000"/><rect x="2" y="10" width="1" height="1" fill="#000"/><rect x="3" y="10" width="1" height="1" fill="#fff"/><rect x="4" y="10" width="2" height="1" fill="#000"/><rect x="6" y="10" width="1" height="1" fill="#fff"/><rect x="7" y="10" width="9" height="1" fill="#000"/><rect x="2" y="11" width="1" height="1" fill="#000"/><rect x="3" y="11" width="3" height="1" fill="#fff"/><rect x="6" y="11" width="2" height="1" fill="#000"/><rect x="8" y="11" width="1" height="1" fill="#fff"/><rect x="9" y="11" width="4" height="1" fill="#000"/><rect x="13" y="11" width="1" height="1" fill="#fff"/><rect x="14" y="11" width="2" height="1" fill="#000"/><rect x="2" y="12" width="6" height="1" fill="#000"/><rect x="8" y="12" width="1" height="1" fill="#fff"/><rect x="9" y="12" width="4" height="1" fill="#000"/><rect x="13" y="12" width="1" height="1" fill="#fff"/><rect x="14" y="12" width="3" height="1" fill="#000"/><rect x="7" y="13" width="10" height="1" fill="#000"/><rect x="7" y="14" width="4" height="1" fill="#000"/><rect x="13" y="14" width="4" height="1" fill="#000"/><rect x="7" y="15" width="1" height="1" fill="#000"/><rect x="8" y="15" width="1" height="1" fill="#fff"/><rect x="9" y="15" width="2" height="1" fill="#000"/><rect x="13" y="15" width="2" height="1" fill="#000"/><rect x="15" y="15" width="1" height="1" fill="#fff"/><rect x="16" y="15" width="1" height="1" fill="#000"/><rect x="7" y="16" width="4" height="1" fill="#000"/><rect x="13" y="16" width="4" height="1" fill="#000"/></svg></div>
<div class="btn b" style="left:669px;top:624px;width:130px;height:45px;font-size:11.5px;letter-spacing:-0.3px;padding-top:28px">Печать карточки</div>
<div class="a" style="left:724px;top:630px"><svg width="18" height="17" viewBox="0 0 18 17" shape-rendering="crispEdges"><rect x="8" y="2" width="8" height="1" fill="#000"/><rect x="7" y="3" width="1" height="1" fill="#000"/><rect x="8" y="3" width="7" height="1" fill="#fff"/><rect x="15" y="3" width="1" height="1" fill="#000"/><rect x="7" y="4" width="1" height="1" fill="#000"/><rect x="8" y="4" width="1" height="1" fill="#fff"/><rect x="9" y="4" width="5" height="1" fill="#000"/><rect x="14" y="4" width="1" height="1" fill="#fff"/><rect x="15" y="4" width="1" height="1" fill="#000"/><rect x="6" y="5" width="1" height="1" fill="#000"/><rect x="7" y="5" width="7" height="1" fill="#fff"/><rect x="14" y="5" width="1" height="1" fill="#000"/><rect x="6" y="6" width="1" height="1" fill="#000"/><rect x="7" y="6" width="1" height="1" fill="#fff"/><rect x="8" y="6" width="5" height="1" fill="#000"/><rect x="13" y="6" width="1" height="1" fill="#fff"/><rect x="14" y="6" width="2" height="1" fill="#000"/><rect x="5" y="7" width="1" height="1" fill="#000"/><rect x="6" y="7" width="7" height="1" fill="#fff"/><rect x="13" y="7" width="1" height="1" fill="#000"/><rect x="14" y="7" width="2" height="1" fill="#909090"/><rect x="16" y="7" width="1" height="1" fill="#000"/><rect x="4" y="8" width="10" height="1" fill="#000"/><rect x="14" y="8" width="1" height="1" fill="#fff"/><rect x="15" y="8" width="1" height="1" fill="#909090"/><rect x="16" y="8" width="1" height="1" fill="#000"/><rect x="3" y="9" width="1" height="1" fill="#000"/><rect x="4" y="9" width="9" height="1" fill="#fff"/><rect x="13" y="9" width="1" height="1" fill="#000"/><rect x="14" y="9" width="1" height="1" fill="#909090"/><rect x="15" y="9" width="1" height="1" fill="#fff"/><rect x="16" y="9" width="1" height="1" fill="#000"/><rect x="2" y="10" width="12" height="1" fill="#000"/><rect x="14" y="10" width="1" height="1" fill="#fff"/><rect x="15" y="10" width="1" height="1" fill="#909090"/><rect x="16" y="10" width="1" height="1" fill="#000"/><rect x="2" y="11" width="1" height="1" fill="#000"/><rect x="3" y="11" width="10" height="1" fill="#909090"/><rect x="13" y="11" width="1" height="1" fill="#000"/><rect x="14" y="11" width="1" height="1" fill="#909090"/><rect x="15" y="11" width="1" height="1" fill="#fff"/><rect x="16" y="11" width="1" height="1" fill="#000"/><rect x="2" y="12" width="1" height="1" fill="#000"/><rect x="3" y="12" width="7" height="1" fill="#909090"/><rect x="10" y="12" width="4" height="1" fill="#000"/><rect x="14" y="12" width="1" height="1" fill="#fff"/><rect x="15" y="12" width="1" height="1" fill="#909090"/><rect x="16" y="12" width="1" height="1" fill="#000"/><rect x="2" y="13" width="1" height="1" fill="#000"/><rect x="3" y="13" width="7" height="1" fill="#909090"/><rect x="10" y="13" width="3" height="1" fill="#fff"/><rect x="13" y="13" width="1" height="1" fill="#000"/><rect x="14" y="13" width="1" height="1" fill="#909090"/><rect x="15" y="13" width="1" height="1" fill="#000"/><rect x="2" y="14" width="12" height="1" fill="#000"/><rect x="14" y="14" width="1" height="1" fill="#fff"/><rect x="15" y="14" width="1" height="1" fill="#000"/><rect x="3" y="15" width="1" height="1" fill="#000"/><rect x="4" y="15" width="9" height="1" fill="#fff"/><rect x="13" y="15" width="2" height="1" fill="#000"/><rect x="4" y="16" width="10" height="1" fill="#000"/></svg></div>
<div class="cb" style="left:803px;top:633px"></div>
<svg class="a" style="left:803px;top:633px" width="13" height="13"><path d="M2.5 6.5 L5 9.5 L10.5 3" stroke="#444" stroke-width="1.3" fill="none"/></svg>
<div class="t" style="left:819px;top:633px">Просмотр</div>
<div class="cb" style="left:803px;top:649px"></div>
<div class="t" style="left:819px;top:648px;font-size:11px;letter-spacing:0">В Word</div>
<div class="btn b" style="left:909px;top:624px;width:95px;height:46px;font-size:11.5px;letter-spacing:-0.5px;padding-top:28px;color:#0000ee;text-decoration:underline">Выход</div>
<div class="a" style="left:946px;top:631px"><svg width="18" height="16" viewBox="0 0 18 16" shape-rendering="crispEdges"><rect x="3" y="2" width="8" height="1" fill="#000"/><rect x="11" y="2" width="7" height="1" fill="#c8c8c8"/><rect x="3" y="3" width="1" height="1" fill="#000"/><rect x="4" y="3" width="1" height="1" fill="#a8a020"/><rect x="5" y="3" width="5" height="1" fill="#fff"/><rect x="10" y="3" width="1" height="1" fill="#000"/><rect x="11" y="3" width="7" height="1" fill="#c8c8c8"/><rect x="3" y="4" width="1" height="1" fill="#000"/><rect x="4" y="4" width="2" height="1" fill="#a8a020"/><rect x="6" y="4" width="4" height="1" fill="#fff"/><rect x="10" y="4" width="1" height="1" fill="#000"/><rect x="11" y="4" width="3" height="1" fill="#c8c8c8"/><rect x="14" y="4" width="1" height="1" fill="#0000c0"/><rect x="15" y="4" width="3" height="1" fill="#c8c8c8"/><rect x="3" y="5" width="1" height="1" fill="#000"/><rect x="4" y="5" width="2" height="1" fill="#a8a020"/><rect x="6" y="5" width="1" height="1" fill="#000"/><rect x="7" y="5" width="3" height="1" fill="#fff"/><rect x="10" y="5" width="1" height="1" fill="#000"/><rect x="11" y="5" width="2" height="1" fill="#c8c8c8"/><rect x="13" y="5" width="2" height="1" fill="#0000c0"/><rect x="15" y="5" width="3" height="1" fill="#c8c8c8"/><rect x="3" y="6" width="1" height="1" fill="#000"/><rect x="4" y="6" width="2" height="1" fill="#a8a020"/><rect x="6" y="6" width="1" height="1" fill="#000"/><rect x="7" y="6" width="3" height="1" fill="#fff"/><rect x="10" y="6" width="1" height="1" fill="#000"/><rect x="11" y="6" width="1" height="1" fill="#c8c8c8"/><rect x="12" y="6" width="6" height="1" fill="#0000c0"/><rect x="3" y="7" width="1" height="1" fill="#000"/><rect x="4" y="7" width="2" height="1" fill="#a8a020"/><rect x="6" y="7" width="1" height="1" fill="#000"/><rect x="7" y="7" width="3" height="1" fill="#fff"/><rect x="10" y="7" width="1" height="1" fill="#000"/><rect x="11" y="7" width="7" height="1" fill="#0000c0"/><rect x="3" y="8" width="1" height="1" fill="#000"/><rect x="4" y="8" width="2" height="1" fill="#a8a020"/><rect x="6" y="8" width="1" height="1" fill="#000"/><rect x="7" y="8" width="3" height="1" fill="#fff"/><rect x="10" y="8" width="1" height="1" fill="#000"/><rect x="11" y="8" width="1" height="1" fill="#c8c8c8"/><rect x="12" y="8" width="6" height="1" fill="#0000c0"/><rect x="3" y="9" width="1" height="1" fill="#000"/><rect x="4" y="9" width="2" height="1" fill="#a8a020"/><rect x="6" y="9" width="1" height="1" fill="#000"/><rect x="7" y="9" width="3" height="1" fill="#fff"/><rect x="10" y="9" width="1" height="1" fill="#000"/><rect x="11" y="9" width="2" height="1" fill="#c8c8c8"/><rect x="13" y="9" width="2" height="1" fill="#0000c0"/><rect x="15" y="9" width="3" height="1" fill="#c8c8c8"/><rect x="3" y="10" width="1" height="1" fill="#000"/><rect x="4" y="10" width="2" height="1" fill="#a8a020"/><rect x="6" y="10" width="1" height="1" fill="#000"/><rect x="7" y="10" width="3" height="1" fill="#fff"/><rect x="10" y="10" width="1" height="1" fill="#000"/><rect x="11" y="10" width="3" height="1" fill="#c8c8c8"/><rect x="14" y="10" width="1" height="1" fill="#0000c0"/><rect x="15" y="10" width="3" height="1" fill="#c8c8c8"/><rect x="3" y="11" width="1" height="1" fill="#000"/><rect x="4" y="11" width="2" height="1" fill="#a8a020"/><rect x="6" y="11" width="1" height="1" fill="#000"/><rect x="7" y="11" width="3" height="1" fill="#fff"/><rect x="10" y="11" width="1" height="1" fill="#000"/><rect x="11" y="11" width="7" height="1" fill="#c8c8c8"/><rect x="2" y="12" width="2" height="1" fill="#000"/><rect x="4" y="12" width="2" height="1" fill="#a8a020"/><rect x="6" y="12" width="9" height="1" fill="#000"/><rect x="15" y="12" width="3" height="1" fill="#c8c8c8"/><rect x="4" y="13" width="1" height="1" fill="#000"/><rect x="5" y="13" width="2" height="1" fill="#a8a020"/><rect x="7" y="13" width="1" height="1" fill="#000"/><rect x="8" y="13" width="10" height="1" fill="#c8c8c8"/><rect x="5" y="14" width="1" height="1" fill="#000"/><rect x="6" y="14" width="1" height="1" fill="#a8a020"/><rect x="7" y="14" width="1" height="1" fill="#000"/><rect x="8" y="14" width="10" height="1" fill="#c8c8c8"/><rect x="6" y="15" width="2" height="1" fill="#000"/><rect x="8" y="15" width="10" height="1" fill="#c8c8c8"/></svg></div>
</body></html>
